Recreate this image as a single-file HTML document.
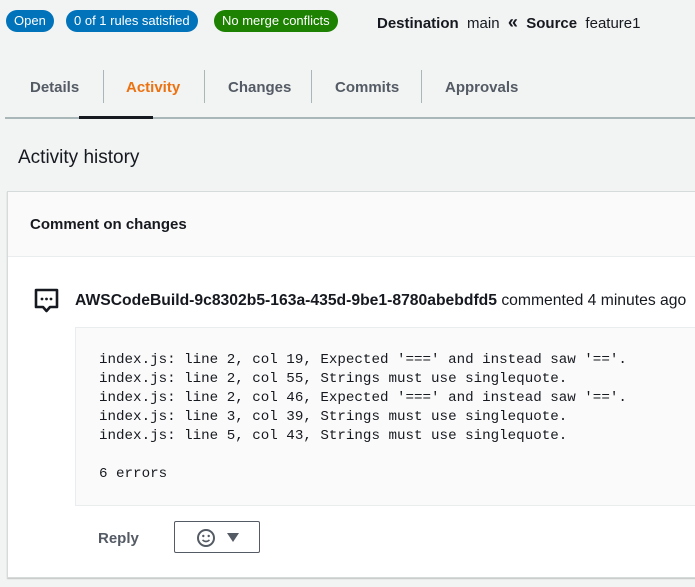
<!DOCTYPE html>
<html><head><style>
body{margin:0;width:695px;height:587px;background:#f2f3f3;font-family:"Liberation Sans",sans-serif;color:#16191f;overflow:hidden;position:relative}
.b{position:absolute;top:10px;height:22px;line-height:22px;border-radius:11px;color:#fff;font-size:13px;padding:0 8px}
.abs{position:absolute;white-space:nowrap}
.tab{position:absolute;top:79px;font-size:15px;font-weight:bold;color:#545b64}
.sep{position:absolute;top:70px;width:1px;height:33px;background:#aab7b8}
pre{margin:0;font-family:"Liberation Mono",monospace;font-size:14.2px;line-height:19px;color:#16191f;white-space:pre !important}
</style></head><body>
<div class="b" style="left:6px;background:#0073bb">Open</div>
<div class="b" style="left:66px;background:#0073bb">0 of 1 rules satisfied</div>
<div class="b" style="left:214px;background:#1d8102">No merge conflicts</div>
<div class="abs" style="left:377px;top:12px;font-size:15px"><b>Destination</b>&nbsp; main &nbsp;<b style="font-size:18px">«</b>&nbsp; <b>Source</b>&nbsp; feature1</div>
<div class="tab" style="left:30px">Details</div>
<div class="sep" style="left:103px"></div>
<div class="tab" style="left:126px;color:#ec7211">Activity</div>
<div class="sep" style="left:204px"></div>
<div class="tab" style="left:228px">Changes</div>
<div class="sep" style="left:311px"></div>
<div class="tab" style="left:335px">Commits</div>
<div class="sep" style="left:421px"></div>
<div class="tab" style="left:445px">Approvals</div>
<div class="abs" style="left:5px;top:117px;width:690px;height:2px;background:#aab7b8"></div>
<div class="abs" style="left:79px;top:116px;width:74px;height:3px;background:#16191f"></div>
<div class="abs" style="left:18px;top:147px;font-size:19px">Activity history</div>
<div class="abs" style="left:7px;top:191px;width:700px;height:385px;background:#fff;border:1px solid #d5dbdb;box-shadow:0 1px 1px rgba(0,0,0,.2)">
  <div style="height:64px;background:#fafafa;border-bottom:1px solid #eaeded"></div>
</div>
<div class="abs" style="left:30px;top:216px;font-size:15px;font-weight:bold">Comment on changes</div>
<svg class="abs" style="left:34px;top:288px" width="26" height="26" viewBox="0 0 26 26"><path d="M2 2h21v17h-7l-3.5 4-3.5-4H2z" fill="none" stroke="#16191f" stroke-width="2.6" stroke-linejoin="round"/><circle cx="8" cy="11" r="1.4" fill="#16191f"/><circle cx="12.5" cy="11" r="1.4" fill="#16191f"/><circle cx="17" cy="11" r="1.4" fill="#16191f"/></svg>
<div class="abs" style="left:75px;top:292px;font-size:15.7px"><b>AWSCodeBuild-9c8302b5-163a-435d-9be1-8780abebdfd5</b> commented 4 minutes ago</div>
<div class="abs" style="left:75px;top:327px;width:640px;height:177px;background:#fafafa;border:1px solid #eaeded"></div>
<pre class="abs" style="left:99px;top:351px">index.js: line 2, col 19, Expected '===' and instead saw '=='.
index.js: line 2, col 55, Strings must use singlequote.
index.js: line 2, col 46, Expected '===' and instead saw '=='.
index.js: line 3, col 39, Strings must use singlequote.
index.js: line 5, col 43, Strings must use singlequote.

6 errors</pre>
<div class="abs" style="left:98px;top:530px;font-size:15px;font-weight:bold;color:#545b64">Reply</div>
<div class="abs" style="left:174px;top:521px;width:84px;height:30px;border:1px solid #545b64;border-radius:2px;background:#fff"></div>
<svg class="abs" style="left:196px;top:528px" width="20" height="20" viewBox="0 0 20 20"><circle cx="10" cy="10" r="8" fill="none" stroke="#545b64" stroke-width="2"/><circle cx="7.3" cy="8" r="1.2" fill="#545b64"/><circle cx="12.7" cy="8" r="1.2" fill="#545b64"/><path d="M6.5 12q3.5 3 7 0" fill="none" stroke="#545b64" stroke-width="1.6"/></svg>
<svg class="abs" style="left:227px;top:533px" width="12" height="10"><path d="M0 0h12L6 9z" fill="#545b64"/></svg>
</body></html>
